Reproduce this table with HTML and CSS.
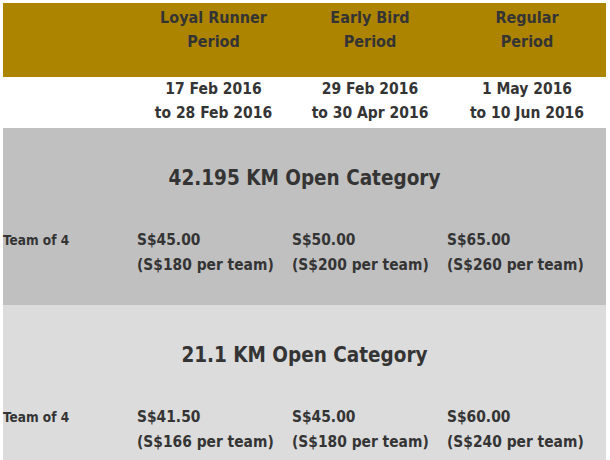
FILE: index.html
```html
<!DOCTYPE html>
<html>
<head>
<meta charset="utf-8">
<link rel="stylesheet" href="styles.css">
</head>
<body>
<div class="pricing">
  <div class="row head">
    <div class="cell"></div>
    <div class="cell center">Loyal Runner<br>Period</div>
    <div class="cell center">Early Bird<br>Period</div>
    <div class="cell center">Regular<br>Period</div>
  </div>
  <div class="row dates">
    <div class="cell"></div>
    <div class="cell center">17 Feb 2016<br>to 28 Feb 2016</div>
    <div class="cell center">29 Feb 2016<br>to 30 Apr 2016</div>
    <div class="cell center">1 May 2016<br>to 10 Jun 2016</div>
  </div>
  <div class="section dark">
    <h2 class="cat">42.195 KM Open Category</h2>
    <div class="prices">
      <div class="cell label">Team of 4</div>
      <div class="cell">S$45.00<br>(S$180 per team)</div>
      <div class="cell">S$50.00<br>(S$200 per team)</div>
      <div class="cell">S$65.00<br>(S$260 per team)</div>
    </div>
  </div>
  <div class="section light">
    <h2 class="cat">21.1 KM Open Category</h2>
    <div class="prices">
      <div class="cell label">Team of 4</div>
      <div class="cell">S$41.50<br>(S$166 per team)</div>
      <div class="cell">S$45.00<br>(S$180 per team)</div>
      <div class="cell">S$60.00<br>(S$240 per team)</div>
    </div>
  </div>
</div>
</body>
</html>
```
FILE: styles.css
```css
html, body {
  margin: 0;
  padding: 0;
  background: #ffffff;
}
body {
  font-family: "DejaVu Sans Condensed", "DejaVu Sans", sans-serif;
  font-weight: bold;
  color: #343434;
}
.pricing {
  width: 603px;
  margin: 3px 0 0 3px;
}
.row {
  display: grid;
  grid-template-columns: 132px 157px 156px 158px;
}
.center {
  text-align: center;
}
.head {
  background: #ad8400;
  height: 74px;
  box-sizing: border-box;
  padding-top: 3px;
  font-size: 16px;
  line-height: 24px;
}
.dates {
  height: 51px;
  box-sizing: border-box;
  font-size: 15.5px;
  line-height: 24px;
}
.section {
  height: 177px;
  box-sizing: border-box;
  padding-top: 36px;
}
.section.light {
  height: 160px;
}
.dark {
  background: #c0c0c0;
}
.light {
  background: #dcdcdc;
}
.cat {
  margin: 0 0 36px 0;
  text-align: center;
  font-size: 20.5px;
  line-height: 28px;
}
.prices {
  display: grid;
  grid-template-columns: 134px 155px 155px auto;
  font-size: 15.4px;
  line-height: 25px;
}
.prices .label {
  font-size: 13.5px;
}
```
